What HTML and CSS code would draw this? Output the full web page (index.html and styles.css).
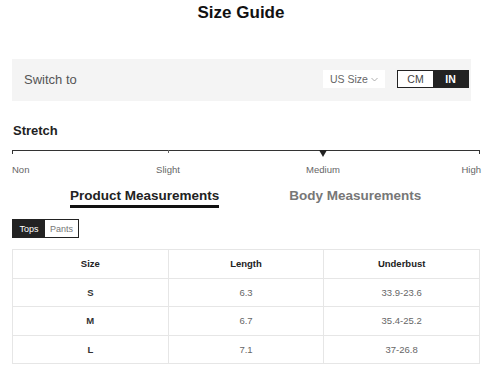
FILE: index.html
```html
<!DOCTYPE html>
<html>
<head>
<meta charset="utf-8">
<link rel="stylesheet" href="styles.css">
</head>
<body>
<div class="page">
  <h1 class="title">Size Guide</h1>
  <div class="switch-bar">
    <span class="switch-label">Switch to</span>
    <div class="switch-controls">
      <div class="size-select">US Size <svg class="chev" width="7" height="5" viewBox="0 0 7 5"><path d="M0.5 1 L3.5 4 L6.5 1" fill="none" stroke="#999" stroke-width="0.8"/></svg></div>
      <div class="unit-toggle">
        <span class="unit">CM</span>
        <span class="unit active">IN</span>
      </div>
    </div>
  </div>
  <h2 class="stretch-title">Stretch</h2>
  <div class="scale">
    <div class="scale-line">
      <span class="tick t0"></span>
      <span class="tick t1"></span>
      <span class="marker"></span>
      <span class="tick t3"></span>
    </div>
    <div class="scale-labels">
      <span class="lbl l0">Non</span>
      <span class="lbl l1">Slight</span>
      <span class="lbl l2">Medium</span>
      <span class="lbl l3">High</span>
    </div>
  </div>
  <div class="tabs">
    <span class="tab active">Product Measurements</span>
    <span class="tab">Body Measurements</span>
  </div>
  <div class="cat-toggle">
    <span class="cat active">Tops</span>
    <span class="cat">Pants</span>
  </div>
  <table class="size-table">
    <thead>
      <tr><th>Size</th><th>Length</th><th>Underbust</th></tr>
    </thead>
    <tbody>
      <tr><td class="sz">S</td><td>6.3</td><td>33.9-23.6</td></tr>
      <tr><td class="sz">M</td><td>6.7</td><td>35.4-25.2</td></tr>
      <tr><td class="sz">L</td><td>7.1</td><td>37-26.8</td></tr>
    </tbody>
  </table>
</div>
</body>
</html>
```
FILE: styles.css
```css
html, body {
  margin: 0;
  padding: 0;
  background: #fff;
  font-family: "Liberation Sans", Arial, sans-serif;
  color: #222;
}
.page {
  padding: 0 2px 0 12px;
}
.title {
  margin: 0;
  padding-top: 3px;
  height: 56px;
  font-size: 17px;
  font-weight: bold;
  text-align: center;
  color: #111;
  line-height: 20px;
  padding-right: 10px;
}
.switch-bar {
  width: 459px;
  height: 42px;
  background: #f4f4f4;
  display: flex;
  align-items: center;
  justify-content: space-between;
  box-sizing: border-box;
  padding: 0 2px 2px 12px;
}
.switch-label {
  font-size: 13px;
  color: #555;
}
.switch-controls {
  display: flex;
  align-items: center;
  gap: 12px;
}
.size-select {
  background: #fff;
  width: 62px;
  height: 18px;
  font-size: 10.5px;
  color: #666;
  display: flex;
  align-items: center;
  justify-content: center;
  gap: 3px;
}
.chev { margin-top: 1px; }
.unit-toggle {
  display: flex;
  border: 1px solid #222;
  height: 18px;
  box-sizing: border-box;
}
.unit {
  width: 35px;
  font-size: 10.5px;
  display: flex;
  align-items: center;
  justify-content: center;
  color: #444;
  background: #fff;
}
.unit.active {
  background: #222;
  color: #fff;
  font-weight: bold;
}
.stretch-title {
  margin: 0;
  padding-top: 22px;
  font-size: 13px;
  line-height: 16px;
  font-weight: bold;
  color: #222;
  padding-left: 1px;
}
.scale {
  width: 468px;
  margin-top: 11px;
}
.scale-line {
  position: relative;
  height: 1px;
  background: #333;
}
.tick {
  position: absolute;
  top: 0;
  width: 1px;
  height: 4px;
  background: #333;
}
.t0 { left: 0; }
.t1 { left: 156px; height: 3px; background: #666; }
.t3 { right: 0; }
.marker {
  position: absolute;
  left: 307px;
  top: 0;
  width: 0;
  height: 0;
  border-left: 4px solid transparent;
  border-right: 4px solid transparent;
  border-top: 7px solid #222;
}
.scale-labels {
  position: relative;
  height: 24px;
  font-size: 9.5px;
  color: #666;
}
.lbl {
  position: absolute;
  top: 13px;
  line-height: 12px;
}
.l0 { left: 0; }
.l1 { left: 156px; transform: translateX(-50%); }
.l2 { left: 311px; transform: translateX(-50%); }
.l3 { right: -1px; }
.tabs {
  display: flex;
  margin-top: 12px;
  padding-left: 58px;
  gap: 70px;
}
.tab {
  font-size: 13.5px;
  font-weight: bold;
  color: #777;
  line-height: 17px;
  padding-bottom: 1px;
}
.tab.active {
  color: #222;
  border-bottom: 3px solid #111;
}
.cat-toggle {
  display: flex;
  margin-top: 11px;
  width: 67px;
  height: 19px;
  border: 1px solid #222;
  box-sizing: border-box;
}
.cat {
  font-size: 9px;
  display: flex;
  align-items: center;
  justify-content: center;
  color: #777;
  width: 34px;
}
.cat.active {
  background: #222;
  color: #fff;
  width: 33px;
}
.size-table {
  margin-top: 11px;
  width: 468px;
  border-collapse: collapse;
  table-layout: fixed;
}
.size-table th, .size-table td {
  border: 1px solid #e6e6e6;
  height: 27.5px;
  padding: 0;
  text-align: center;
  font-size: 9.5px;
}
.size-table th {
  font-weight: bold;
  color: #222;
}
.size-table td {
  color: #666;
}
.size-table td.sz {
  font-weight: bold;
  color: #333;
}
```
